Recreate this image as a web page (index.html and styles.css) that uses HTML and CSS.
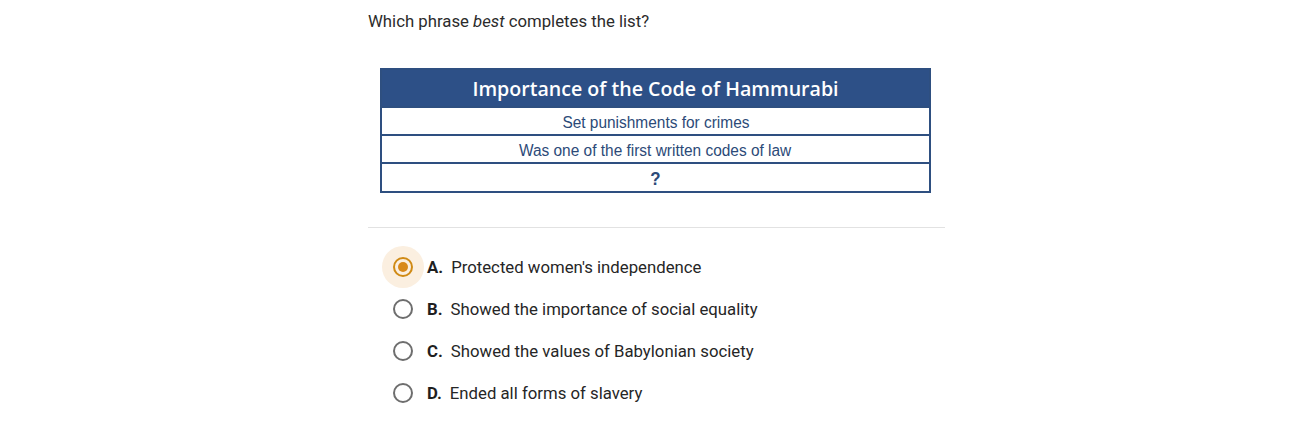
FILE: index.html
```html
<!DOCTYPE html>
<html>
<head>
<meta charset="utf-8">
<link rel="stylesheet" href="styles.css">
</head>
<body>
<main class="question">
  <p class="prompt">Which phrase <em>best</em> completes the list?</p>
  <div class="figure">
    <div class="tbl">
      <div class="tbl-head">Importance of the Code of Hammurabi</div>
      <div class="tbl-row"><span class="cell">Set punishments for crimes</span></div>
      <div class="tbl-row"><span class="cell">Was one of the first written codes of law</span></div>
      <div class="tbl-row tbl-q"><span class="cell">?</span></div>
    </div>
  </div>
  <hr class="divider">
  <ul class="choices">
    <li class="choice selected"><span class="radio"><span class="halo"></span><span class="ring"></span></span><b>A.</b><span class="txt">Protected women's independence</span></li>
    <li class="choice"><span class="radio"><span class="ring"></span></span><b>B.</b><span class="txt">Showed the importance of social equality</span></li>
    <li class="choice"><span class="radio"><span class="ring"></span></span><b>C.</b><span class="txt">Showed the values of Babylonian society</span></li>
    <li class="choice"><span class="radio"><span class="ring"></span></span><b>D.</b><span class="txt">Ended all forms of slavery</span></li>
  </ul>
</main>
</body>
</html>
```
FILE: styles.css
```css
html, body { margin: 0; padding: 0; background: #fff; }
body { font-family: Roboto, "Liberation Sans", Arial, sans-serif; color: #222; }
.question { width: 577px; padding: 9px 0 0 368px; }
.prompt { margin: 0; font-size: 16.75px; line-height: 24px; color: #2b2b2b; }
.prompt em { font-style: italic; }
.figure { padding: 35px 0 0 12px; }
.tbl { width: 547px; border: 2px solid #2e4f80; background: #fff; }
.tbl-head { background: #2d5087; color: #fff; height: 36px; line-height: 38px; text-align: center;
  font-family: "Open Sans", "Noto Sans", sans-serif; font-weight: 600; font-size: 19.6px; }
.tbl-row { height: 26px; line-height: 30px; text-align: center; border-top: 2px solid #2e4f80;
  font-family: "Liberation Sans", Arial, sans-serif; font-size: 16px; color: #2c4a78; overflow: hidden; }
.cell { display: inline-block; transform: scaleX(0.965); }
.tbl-q { height: 27px; line-height: 30px; font-weight: 700; font-size: 17.5px; }
.divider { margin: 34px 0 0 0; border: 0; border-top: 1px solid #e2e2e2; height: 0; }
.choices { list-style: none; margin: 18px 0 0 0; padding: 0; }
.choice { display: flex; align-items: center; height: 42px; font-size: 16.75px; color: #222; }
.radio { position: relative; width: 20px; height: 20px; margin-left: 25px; margin-right: 14px; flex: none; }
.ring { position: absolute; inset: 0; border: 2px solid #6e6e6e; border-radius: 50%; box-sizing: border-box; background: #fff; }
.halo { position: absolute; left: -11px; top: -11px; width: 42px; height: 42px; border-radius: 50%; background: #fbefe0; }
.selected .ring { border-color: #d08a14; background: transparent; }
.selected .ring::after { content: ""; position: absolute; left: 3px; top: 3px; width: 10px; height: 10px; border-radius: 50%; background: #d8891a; }
.choice b { font-weight: 700; margin-right: 8px; color: #1f1f1f; }
.txt { color: #262626; }
```
